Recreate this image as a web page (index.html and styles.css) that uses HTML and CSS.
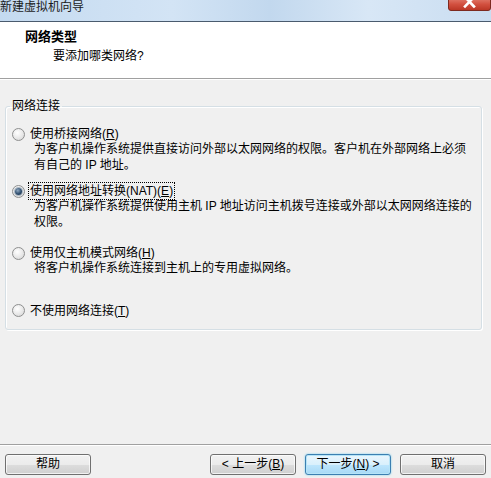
FILE: index.html
```html
<!DOCTYPE html>
<html lang="zh-CN">
<head>
<meta charset="utf-8">
<title>新建虚拟机向导</title>
<link rel="stylesheet" href="styles.css">
</head>
<body>
<div class="window">
  <div class="titlebar">
    <span class="title">新建虚拟机向导</span>
    <span class="close">
      <svg width="43" height="11" viewBox="0 0 43 11">
        <defs>
          <linearGradient id="rg" x1="0" y1="0" x2="0" y2="1">
            <stop offset="0" stop-color="#e27d6e"/>
            <stop offset="0.5" stop-color="#d2503f"/>
            <stop offset="1" stop-color="#b93524"/>
          </linearGradient>
        </defs>
        <path d="M0.5 -2 V8 Q0.5 10.5 3 10.5 H40 Q42.5 10.5 42.5 8 V-2 Z" fill="url(#rg)" stroke="#7d2a20"/>
        <path d="M17 -3 L26 6.5 M26 -3 L17 6.5" stroke="#fff" stroke-width="2.6" stroke-linecap="square"/>
      </svg>
    </span>
  </div>
  <div class="header">
    <div class="h-title">网络类型</div>
    <div class="h-sub">要添加哪类网络?</div>
  </div>
  <main class="main">
    <fieldset class="group">
      <legend>网络连接</legend>
      <div class="option">
        <div class="opt-row"><span class="radio"></span><span class="label">使用桥接网络(<u>R</u>)</span></div>
        <div class="desc">为客户机操作系统提供直接访问外部以太网网络的权限。客户机在外部网络上必须<br>有自己的 IP 地址。</div>
      </div>
      <div class="option opt-nat">
        <div class="opt-row"><span class="radio checked"></span><span class="label focus">使用网络地址转换(NAT)(<u>E</u>)</span></div>
        <div class="desc">为客户机操作系统提供使用主机 IP 地址访问主机拨号连接或外部以太网网络连接的<br>权限。</div>
      </div>
      <div class="option opt-host">
        <div class="opt-row"><span class="radio"></span><span class="label">使用仅主机模式网络(<u>H</u>)</span></div>
        <div class="desc">将客户机操作系统连接到主机上的专用虚拟网络。</div>
      </div>
      <div class="option opt-none">
        <div class="opt-row"><span class="radio"></span><span class="label">不使用网络连接(<u>T</u>)</span></div>
      </div>
    </fieldset>
  </main>
  <footer class="footer">
    <button class="btn">帮助</button>
    <div class="nav">
      <button class="btn">&lt; 上一步(<u>B</u>)</button>
      <button class="btn primary">下一步(<u>N</u>) &gt;</button>
      <button class="btn">取消</button>
    </div>
  </footer>
</div>
</body>
</html>
```
FILE: styles.css
```css
* { box-sizing: border-box; }
html, body { margin: 0; padding: 0; }
body {
  width: 491px;
  height: 478px;
  overflow: hidden;
  background: #f0f0f0;
  font-family: "Liberation Sans", "Noto Sans CJK SC", sans-serif;
  font-size: 12px;
  color: #000;
}
.window {
  display: flex;
  flex-direction: column;
  height: 478px;
}
.titlebar {
  height: 22px;
  display: flex;
  justify-content: space-between;
  align-items: flex-start;
  background: linear-gradient(to right, #c4daf0 0%, #d3e4f5 35%, #c2d8ee 55%, #d8e7f6 75%, #c9ddf1 100%);
  border-bottom: 1px solid #4a5b6e;
}
.title {
  margin-left: 0;
  line-height: 14px;
  color: #1a1a1a;
}
.close {
  display: block;
  height: 11px;
  line-height: 0;
}
.header {
  height: 57px;
  background: #fff;
  border-bottom: 1px solid #a0a0a0;
  padding-top: 7px;
}
.h-title {
  margin-left: 25px;
  font-weight: bold;
  font-size: 13px;
  line-height: 16px;
}
.h-sub {
  margin-left: 53px;
  margin-top: 3px;
  line-height: 16px;
}
.main {
  flex: 1;
  padding: 18px 9px 0 5px;
  border-top: 1px solid #fff;
}
.group {
  margin: 0;
  padding: 12px 8px 10px 4px;
  border: 1px solid #d5dfe5;
  border-radius: 3px;
  box-shadow: inset 1px 1px 0 #fff, 1px 1px 0 #fff;
}
.group legend {
  padding: 0 2px;
  line-height: 16px;
}
.opt-row {
  display: flex;
  align-items: center;
  gap: 5px;
  padding-left: 2px;
  height: 16px;
}
.label {
  line-height: 16px;
}
.focus {
  outline: 1px dotted #000;
  outline-offset: 0;
  padding: 0 1px;
  margin-left: -1px;
}
.desc {
  padding-left: 24px;
  line-height: 15.5px;
}
.opt-nat { margin-top: 10px; }
.opt-host { margin-top: 15px; }
.opt-none { margin-top: 26px; }
.radio {
  position: relative;
  flex: none;
  width: 13px;
  height: 13px;
  border-radius: 50%;
  border: 1px solid #8e8f8f;
  background: radial-gradient(circle at 40% 35%, #ffffff 0%, #ececec 45%, #d2d2d2 100%);
}
.radio.checked::after {
  content: "";
  position: absolute;
  left: 2px;
  top: 2px;
  width: 7px;
  height: 7px;
  border-radius: 50%;
  background: radial-gradient(circle at 40% 35%, #8fa8c0 0%, #2f4e6e 55%, #1c2f44 100%);
  box-shadow: 0 0 0 1px #a9b6c2;
}
.footer {
  display: flex;
  justify-content: space-between;
  padding: 9px 5px 3px 5px;
  border-top: 1px solid #a0a0a0;
  box-shadow: inset 0 1px 0 #fff;
}
.nav {
  display: flex;
  gap: 9px;
}
.btn {
  width: 86px;
  height: 21px;
  padding: 0;
  font-family: "Liberation Sans", "Noto Sans CJK SC", sans-serif;
  font-size: 12px;
  line-height: 19px;
  color: #000;
  border: 1px solid #707070;
  border-radius: 3px;
  background: linear-gradient(#f2f2f2 0%, #ebebeb 50%, #dddddd 50%, #cfcfcf 100%);
  box-shadow: inset 0 0 0 1px rgba(255,255,255,0.7);
}
.btn.primary {
  border-color: #3c7fb1;
  background: linear-gradient(#eaf6fd 0%, #d9f0fc 50%, #bee6fd 50%, #a7d9f5 100%);
  box-shadow: inset 0 0 0 1px #b6e4f7, 0 0 2px #6ccff0;
}
```
